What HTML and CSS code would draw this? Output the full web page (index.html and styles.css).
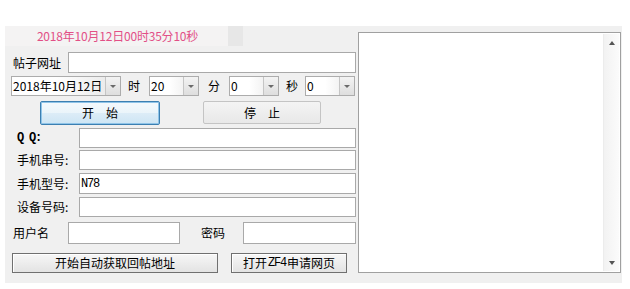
FILE: index.html
```html
<!DOCTYPE html>
<html>
<head>
<meta charset="utf-8">
<link rel="stylesheet" href="styles.css">
</head>
<body>
<div class="panel">
  <div class="left">
    <div class="row row-title">
      <div class="clock">2018年10月12日00时35分10秒</div>
      <div class="strip"></div>
    </div>
    <div class="row r1">
      <span class="lbl w55">帖子网址</span>
      <div class="input w288"></div>
    </div>
    <div class="row r2">
      <div class="combo cdate"><span class="ctext">2018年10月12日</span><span class="cbtn"><i class="arr"></i></span></div>
      <span class="unit u1">时</span>
      <div class="combo csmall"><span class="ctext">20</span><span class="cbtn"><i class="arr"></i></span></div>
      <span class="unit u2">分</span>
      <div class="combo csmall"><span class="ctext">0</span><span class="cbtn"><i class="arr"></i></span></div>
      <span class="unit u3">秒</span>
      <div class="combo csmall"><span class="ctext">0</span><span class="cbtn"><i class="arr"></i></span></div>
    </div>
    <div class="row r3">
      <div class="btn focus bstart">开　始</div>
      <div class="btn bstop">停　止</div>
    </div>
    <div class="row r4">
      <span class="lbl2 mono">Q Q:</span>
      <div class="input w277"></div>
    </div>
    <div class="row r5">
      <span class="lbl2">手机串号:</span>
      <div class="input w277"></div>
    </div>
    <div class="row r6">
      <span class="lbl2">手机型号:</span>
      <div class="input w277"><span class="mono val">N78</span></div>
    </div>
    <div class="row r7">
      <span class="lbl2">设备号码:</span>
      <div class="input w277"></div>
    </div>
    <div class="row r8">
      <span class="lbl w55">用户名</span>
      <div class="input w112"></div>
      <span class="lbl pwl">密码</span>
      <div class="input w113"></div>
    </div>
    <div class="row r9">
      <div class="btn bauto">开始自动获取回帖地址</div>
      <div class="btn bopen">打开<span class="mono zf">ZF4</span>申请网页</div>
    </div>
  </div>
  <div class="memo">
    <div class="memo-body"></div>
    <div class="sbar">
      <div class="sbtn"><i class="up"></i></div>
      <div class="strack"></div>
      <div class="sbtn"><i class="down"></i></div>
    </div>
  </div>
</div>
</body>
</html>
```

FILE: styles.css
```css
* { box-sizing: border-box; }
html, body { margin: 0; padding: 0; background: #fff; }
body {
  padding: 26px 0 0 5px;
  font-family: "Noto Sans CJK SC", "Liberation Sans", sans-serif;
  font-size: 12px;
  color: #000;
}
.panel {
  width: 617px;
  height: 257px;
  background: #f0f0f0;
  display: flex;
  align-items: flex-start;
}
.left {
  width: 353px;
  display: flex;
  flex-direction: column;
}
.row { display: flex; align-items: center; }
.row-title { height: 20px; align-items: stretch; }
.clock {
  width: 223px;
  background: #f4f3f3;
  color: #e24f86;
  display: flex;
  align-items: center;
  justify-content: center;
  padding-left: 2px;
  line-height: 1;
  letter-spacing: -0.2px;
}
.strip { width: 15px; background: #e7e7e7; }
.r1 { margin-top: 6px; height: 21px; padding-left: 8px; }
.r2 { margin-top: 3px; height: 20px; padding-left: 6px; }
.r3 { margin-top: 5px; height: 24px; padding-left: 35px; align-items: flex-start; }
.r4 { margin-top: 3px; height: 20px; padding-left: 12px; }
.r5 { margin-top: 2px; height: 20px; padding-left: 12px; }
.r6 { margin-top: 3px; height: 21px; padding-left: 12px; }
.r7 { margin-top: 3px; height: 20px; padding-left: 12px; }
.r8 { margin-top: 5px; height: 22px; padding-left: 8px; }
.r9 { margin-top: 9px; height: 20px; padding-left: 7px; }

.lbl { line-height: 1; }
.w55 { width: 55px; }
.lbl2 { width: 62px; line-height: 1; }
.pwl { margin-left: 21px; width: 42px; }
.mono {
  font-family: "Liberation Mono", "DejaVu Sans Mono", monospace;
  font-size: 12px;
  letter-spacing: -1.2px;
  font-weight: bold;
}
.zf { margin: 0 1px; font-weight: normal; }
.input {
  height: 100%;
  background: #fff;
  border: 1px solid #a9a9a9;
  display: flex;
  align-items: center;
}
.w288 { width: 288px; }
.w277 { width: 277px; }
.w112 { width: 112px; }
.w113 { width: 113px; }
.val { padding-left: 1px; font-weight: normal; }

.combo {
  height: 20px;
  border: 1px solid #acacac;
  background: linear-gradient(to right, #fff 0%, #fff 40%, #e6e6e6 100%);
  display: flex;
  align-items: stretch;
}
.cdate { width: 110px; }
.csmall { width: 50px; }
.ctext { flex: 1; display: flex; align-items: center; padding-left: 1px; line-height: 1; white-space: nowrap; }
.cbtn {
  width: 15px;
  border-left: 1px solid #c5c5c5;
  background: linear-gradient(to bottom, #f3f3f3, #dedede);
  display: flex;
  align-items: center;
  justify-content: center;
}
.arr {
  width: 0; height: 0;
  border-left: 3px solid transparent;
  border-right: 3px solid transparent;
  border-top: 3px solid #6a6a6a;
}
.unit { width: 12px; line-height: 1; }
.u1 { margin: 0 9px 0 7px; }
.u2 { margin: 0 9px 0 9px; }
.u3 { margin: 0 7px 0 7px; }

.btn {
  display: flex;
  align-items: center;
  justify-content: center;
  border: 1px solid #acacac;
  border-radius: 2px;
  background: linear-gradient(to bottom, #f2f2f2 0%, #ebebeb 50%, #dddddd 51%, #cfcfcf 100%);
  line-height: 1;
}
.bstart { width: 120px; height: 24px; }
.focus {
  border-color: #3c7fb1;
  box-shadow: inset 0 0 0 1px #8fc4e8;
  background: linear-gradient(to bottom, #f4f9fc 0%, #eaf4fa 50%, #dcecf7 51%, #cde5f4 100%);
}
.bstop {
  width: 118px; height: 23px; margin-left: 43px;
  background: linear-gradient(to bottom, #f4f4f4, #e8e8e8);
  border-color: #c4c4c4;
}
.bauto { width: 206px; height: 20px; border-color: #707070; border-radius: 0; box-shadow: inset 1px 1px 0 #fff; background: linear-gradient(to bottom, #f7f7f7, #e3e3e3); }
.bopen { width: 116px; height: 20px; margin-left: 13px; border-color: #707070; border-radius: 0; box-shadow: inset 1px 1px 0 #fff; background: linear-gradient(to bottom, #f7f7f7, #e3e3e3); }

.memo {
  margin-top: 6px;
  width: 263px;
  height: 241px;
  border: 1px solid #a0a0a0;
  background: #fff;
  display: flex;
}
.memo-body { flex: 1; }
.sbar {
  width: 16px;
  margin: 1px 1px 1px 0;
  border-left: 1px solid #ececec;
  background: linear-gradient(to right, #f2f2f2, #fbfbfb);
  display: flex;
  flex-direction: column;
}
.sbtn {
  height: 17px;
  display: flex;
  align-items: center;
  justify-content: center;
}
.strack { flex: 1; }
.up {
  width: 0; height: 0;
  border-left: 3px solid transparent;
  border-right: 3px solid transparent;
  border-bottom: 4px solid #555;
}
.down {
  width: 0; height: 0;
  border-left: 3px solid transparent;
  border-right: 3px solid transparent;
  border-top: 4px solid #555;
}
```
